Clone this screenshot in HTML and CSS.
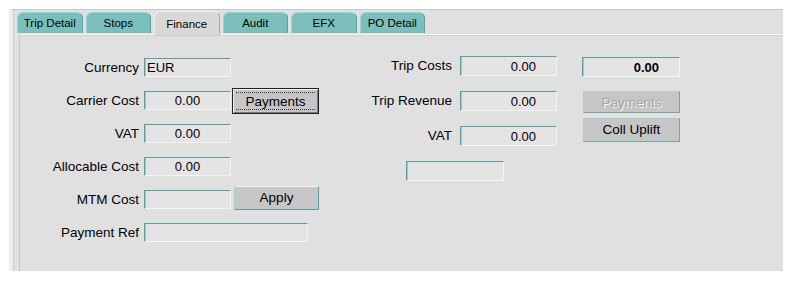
FILE: index.html
```html
<!DOCTYPE html>
<html>
<head>
<meta charset="utf-8">
<link rel="stylesheet" href="styles.css">
</head>
<body>
<div class="window">
  <div class="tabs">
    <div class="tab">Trip Detail</div>
    <div class="tab">Stops</div>
    <div class="tab tab-active">Finance</div>
    <div class="tab">Audit</div>
    <div class="tab">EFX</div>
    <div class="tab">PO Detail</div>
  </div>
  <div class="panel">
    <div class="left">
      <div class="row"><span class="label">Currency</span><span class="field field-left">EUR</span></div>
      <div class="row"><span class="label">Carrier Cost</span><span class="field field-center">0.00</span><button class="btn btn-focus"><span class="focus">Payments</span></button></div>
      <div class="row"><span class="label">VAT</span><span class="field field-center">0.00</span></div>
      <div class="row"><span class="label">Allocable Cost</span><span class="field field-center">0.00</span></div>
      <div class="row"><span class="label">MTM Cost</span><span class="field"></span><button class="btn btn-apply">Apply</button></div>
      <div class="row"><span class="label">Payment Ref</span><span class="field field-wide"></span></div>
    </div>
    <div class="right">
      <span class="rlabel">Trip Costs</span><span class="field rfield">0.00</span><span class="field rfield total">0.00</span>
      <span class="rlabel">Trip Revenue</span><span class="field rfield">0.00</span>
      <div class="rbtns">
        <button class="btn btn-r btn-disabled">Payments</button>
        <button class="btn btn-r">Coll Uplift</button>
      </div>
      <span class="rlabel">VAT</span><span class="field rfield">0.00</span>
      <span class="field empty"></span>
    </div>
  </div>
</div>
</body>
</html>
```

FILE: styles.css
```css
html, body {
  margin: 0;
  padding: 0;
  background: #ffffff;
}
body {
  font-family: "Liberation Sans", Arial, sans-serif;
  color: #000;
}
.window {
  margin: 9px 0 0 9px;
  width: 764px;
  height: 261px;
  background: #e0e0e0;
  border-top: 1px solid #c9c9c9;
  border-left: 4px solid #ededed;
  box-shadow: inset 1px 0 0 #cdcdcd;
  padding-left: 6px;
  display: flex;
  flex-direction: column;
}
.tabs {
  height: 24px;
  display: flex;
  align-items: flex-end;
  gap: 3px;
  margin-left: -2px;
  position: relative;
  z-index: 1;
}
.tab {
  width: 65.5px;
  height: 21px;
  box-sizing: border-box;
  background: #7bbfbd;
  border: 1px solid #9fd2d0;
  border-bottom: none;
  border-right-color: #5f9f9d;
  border-radius: 6px 6px 0 0;
  font-size: 11.5px;
  text-align: center;
  line-height: 21px;
  margin-bottom: 1px;
}
.tab-active {
  height: 24px;
  line-height: 24px;
  margin-bottom: -1px;
  background: #d8d8d8;
  border-color: #f2f2f2;
  border-right-color: #a8a8a8;
}
.panel {
  flex: 1;
  border-top: 1px solid #f8f8f8;
  border-left: 1px solid #c4c4c4;
  box-shadow: inset 0 1px 0 #d0d0d0;
  display: flex;
  padding-top: 21px;
  font-size: 13.5px;
}
.left {
  width: 340px;
  margin-top: 2px;
  display: flex;
  flex-direction: column;
  gap: 14px;
}
.row {
  height: 19px;
  display: flex;
  align-items: center;
}
.label {
  width: 124px;
  text-align: right;
  padding-right: 5px;
  box-sizing: border-box;
  white-space: nowrap;
}
.field {
  box-sizing: border-box;
  height: 19px;
  width: 87px;
  background: #e4e4e4;
  border: 1px solid;
  border-color: #5e9e9c #f4f4f4 #f4f4f4 #5e9e9c;
  box-shadow: inset 1px 0 0 #9cc7c5;
  font-size: 13px;
  line-height: 17px;
  white-space: nowrap;
}
.field-left {
  padding-left: 2px;
}
.field-center {
  text-align: center;
}
.field-wide {
  width: 164px;
}
.btn {
  font-family: "Liberation Sans", Arial, sans-serif;
  font-size: 13.5px;
  color: #000;
  box-sizing: border-box;
  background: #c6c6c6;
  padding: 0;
  margin: 0;
}
.btn-focus {
  width: 87px;
  height: 26px;
  margin-left: 1px;
  border: 1px solid #222;
  box-shadow: inset 1px 1px 0 #f0f0f0, inset -1px -1px 0 #7a7a7a;
  padding: 3px;
}
.focus {
  display: block;
  height: 18px;
  line-height: 17px;
  border: 1px dotted #333;
  border-left: none;
  border-right: none;
  box-sizing: border-box;
}
.btn-apply {
  width: 85px;
  height: 24px;
  margin-left: 3px;
  margin-top: -3px;
  border: 1px solid;
  border-color: #f2f2f2 #5e9e9c #5e9e9c #a9c9c8;
  line-height: 20px;
}
.right {
  display: grid;
  grid-template-columns: 92px 97px 98px;
  grid-template-rows: 20px 20px 20px 20px;
  column-gap: 8px;
  row-gap: 15px;
  align-content: start;
  align-items: center;
}
.right > .rlabel {
  grid-column: 1;
  text-align: right;
  white-space: nowrap;
  margin-top: -1px;
}
.rfield {
  grid-column: 2;
  width: 97px;
  height: 20px;
  text-align: right;
  padding-right: 20px;
  line-height: 19px;
}
.total {
  grid-column: 3;
  grid-row: 1;
  width: 98px;
  margin-left: 17px;
  font-weight: bold;
  margin-top: 2px;
}
.rbtns {
  grid-column: 3;
  grid-row: 2 / span 2;
  align-self: start;
  margin-left: 18px;
  display: flex;
  flex-direction: column;
  gap: 5px;
}
.btn-r {
  width: 97px;
  height: 22px;
  border: 1px solid;
  border-color: #a6d0ce #6ea9a7 #6ea9a7 #a6d0ce;
  line-height: 19px;
}
.btn-r + .btn-r {
  height: 24px;
  line-height: 20px;
}
.btn-disabled {
  color: #a6a6a6;
  text-shadow: 1px 1px 0 #f4f4f4;
}
.empty {
  grid-column: 1 / span 2;
  grid-row: 4;
  width: 98px;
  height: 20px;
  margin-left: 46px;
}
```
